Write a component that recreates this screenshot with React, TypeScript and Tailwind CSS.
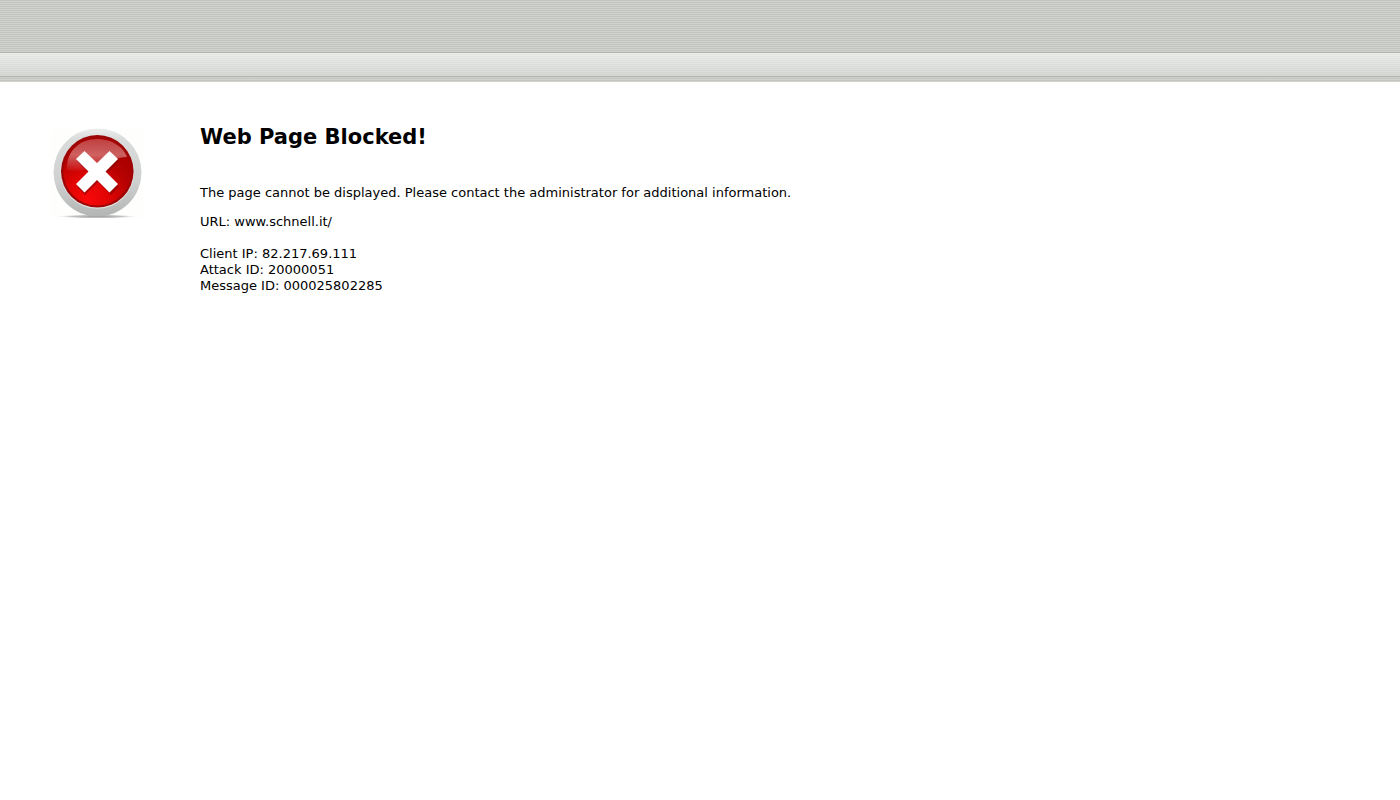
const details = [
  { label: "Client IP", value: "82.217.69.111" },
  { label: "Attack ID", value: "20000051" },
  { label: "Message ID", value: "000025802285" },
];

function BlockedIcon() {
  return (
    <svg viewBox="0 0 100 100" className="w-[100px] h-[100px] shrink-0" role="img" aria-label="Blocked">
      <defs>
        <linearGradient id="ring" x1="0" y1="0" x2="0" y2="1">
          <stop offset="0" stopColor="#eceeed" />
          <stop offset="0.12" stopColor="#d9dcdb" />
          <stop offset="0.6" stopColor="#ced1d0" />
          <stop offset="1" stopColor="#b3b5b4" />
        </linearGradient>
        <radialGradient id="disc" cx="0.35" cy="0.9" r="0.75">
          <stop offset="0" stopColor="#fa0808" />
          <stop offset="0.45" stopColor="#de0404" />
          <stop offset="0.8" stopColor="#b80202" />
          <stop offset="1" stopColor="#ac0000" />
        </radialGradient>
        <linearGradient id="gloss" x1="0" y1="0" x2="0" y2="1">
          <stop offset="0" stopColor="#fff" stopOpacity="0.25" />
          <stop offset="0.5" stopColor="#fff" stopOpacity="0.38" />
          <stop offset="1" stopColor="#fff" stopOpacity="0.04" />
        </linearGradient>
        <radialGradient id="shadow">
          <stop offset="0" stopColor="#9a9d9a" />
          <stop offset="0.6" stopColor="#c4c6c4" />
          <stop offset="1" stopColor="#fff" stopOpacity="0" />
        </radialGradient>
      </defs>
      <rect x="4" y="7" width="92" height="90" fill="#fefffd" />
      <ellipse cx="50" cy="94.5" rx="43" ry="2" fill="url(#shadow)" />
      <circle cx="50.5" cy="50.5" r="44" fill="url(#ring)" />
      <circle cx="50.3" cy="49.8" r="37" fill="#dfe1e0" />
      <circle cx="50.3" cy="49.3" r="36.3" fill="#9c0606" />
      <circle cx="50.3" cy="49.5" r="34" fill="url(#disc)" />
      <path d="M20 48 C19 29 33 17 50 17 C66 17 77 26 80 35 C72 35 61 39 52 43 C41 48 30 50 20 48Z" fill="url(#gloss)" />
      <path d="M38 31 L51 44 L64 31 L72 39 L59 52 L72 65 L64 73 L51 60 L38 73 L30 65 L43 52 L30 39Z" fill="#700" opacity="0.5" />
      <path d="M37.5 29 L50 41 L62.5 29 L71 37 L58.5 49.5 L71 62 L62.5 70.5 L50 58 L37.5 70.5 L29 62 L41.5 49.5 L29 37Z" fill="#fff" />
    </svg>
  );
}

export default function App() {
  return (
    <div className="min-h-screen bg-white text-black text-[13px] leading-4 font-['Verdana','DejaVu_Sans',sans-serif]">
      <header>
        <div className="h-[52px] bg-[repeating-linear-gradient(to_bottom,#c1c3be_0px,#c1c3be_1px,#d2d5cf_1px,#d2d5cf_2px)]" />
        <div className="h-6 border-t border-[#b0b2ae] bg-[repeating-linear-gradient(to_bottom,#0000_0px,#0000_1px,#00000008_1px,#00000008_2px),linear-gradient(to_bottom,#eceeeb,#d7dad6)]" />
        <div className="h-[6px] border-t border-[#b0b3af] bg-[repeating-linear-gradient(to_bottom,#d0d3ce_0px,#d0d3ce_1px,#c4c6c2_1px,#c4c6c2_2px)]" />
      </header>

      <main className="flex items-start gap-[53px] px-[47px] pt-10">
        <BlockedIcon />
        <div>
          <h1 className="pt-px text-[21px] leading-7 font-bold">Web Page Blocked!</h1>
          <p className="mt-[34px]">
            The page cannot be displayed. Please contact the administrator for additional information.
          </p>
          <p className="mt-[13px]">URL: www.schnell.it/</p>
          <div className="mt-4">
            {details.map((item) => (
              <p key={item.label}>
                {item.label}: {item.value}
              </p>
            ))}
          </div>
        </div>
      </main>
    </div>
  );
}
